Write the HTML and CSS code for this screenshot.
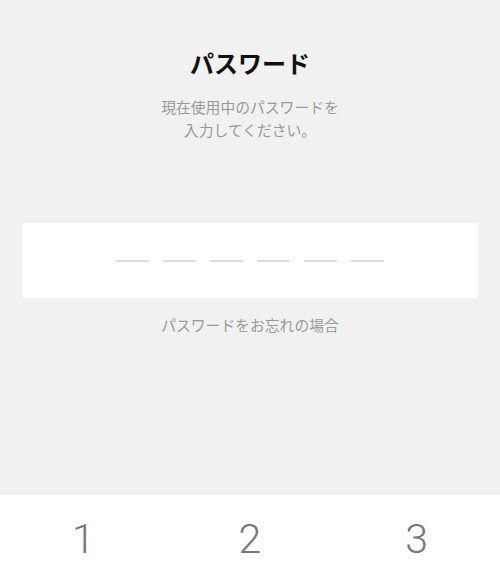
FILE: index.html
```html
<!DOCTYPE html>
<html lang="ja">
<head>
<meta charset="utf-8">
<link rel="stylesheet" href="styles.css">
</head>
<body>
<div class="page">
  <div class="header">
    <h1 class="title">パスワード</h1>
    <p class="subtitle">現在使用中のパスワードを<br>入力してください。</p>
  </div>
  <div class="code-box">
    <span class="dash"></span><span class="dash"></span><span class="dash"></span><span class="dash"></span><span class="dash"></span><span class="dash"></span>
  </div>
  <p class="forgot">パスワードをお忘れの場合</p>
  <div class="keypad">
    <div class="key">1</div>
    <div class="key">2</div>
    <div class="key">3</div>
  </div>
</div>
</body>
</html>
```
FILE: styles.css
```css
html, body {
  margin: 0;
  padding: 0;
  background: #f1f1f1;
}
body {
  font-family: "Noto Sans CJK JP", "Noto Sans", sans-serif;
}
.page {
  height: 573px;
  overflow: hidden;
  display: flex;
  flex-direction: column;
}
.header {
  padding-top: 48px;
  text-align: center;
}
.title {
  margin: 0;
  font-size: 24px;
  line-height: 29px;
  font-weight: 700;
  color: #111;
}
.subtitle {
  margin: 18px 0 0;
  font-size: 14.8px;
  line-height: 23px;
  color: #999;
}
.code-box {
  margin: 82px 22px 0;
  height: 75px;
  background: #fff;
  display: flex;
  justify-content: center;
  align-items: center;
  gap: 14px;
}
.dash {
  width: 33px;
  height: 2px;
  background: #dcdcdc;
}
.forgot {
  margin: 15px 0 0;
  text-align: center;
  font-size: 14.8px;
  line-height: 23px;
  color: #999;
}
.keypad {
  margin-top: auto;
  height: 78px;
  background: #fff;
  display: grid;
  grid-template-columns: 1fr 1fr 1fr;
}
.key {
  text-align: center;
  font-family: Roboto, "Liberation Sans", sans-serif;
  font-weight: 300;
  font-size: 41px;
  line-height: 88px;
  color: #777;
}
```
